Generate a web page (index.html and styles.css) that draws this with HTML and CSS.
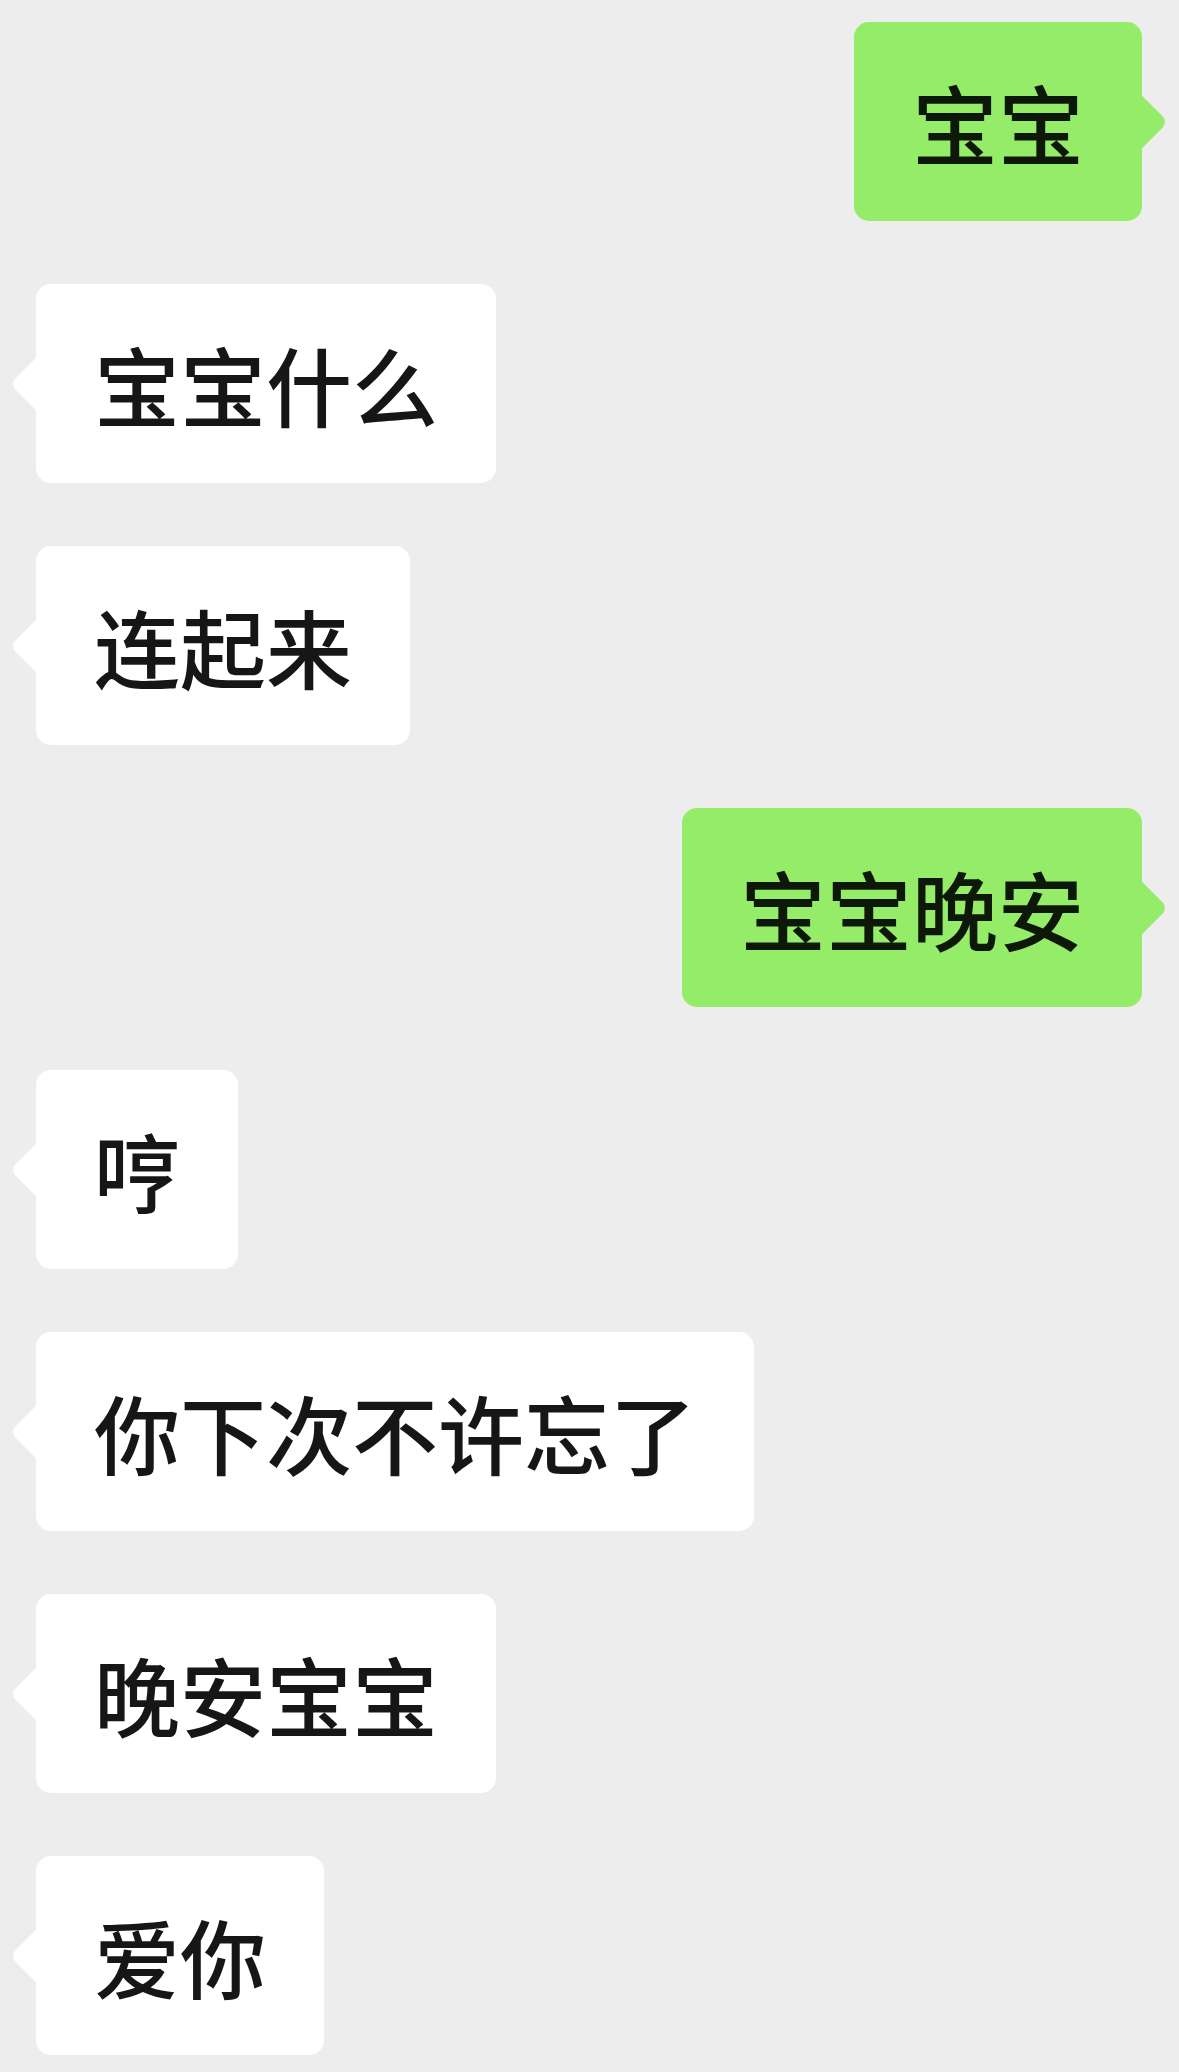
FILE: index.html
```html
<!DOCTYPE html>
<html lang="zh-CN">
<head>
  <meta charset="UTF-8" />
  <title>聊天</title>
  <meta name="viewport" content="width=device-width, initial-scale=1" />
  <link rel="stylesheet" href="styles.css">
</head>
<body>
  <div class="chat">
    <div class="row me"><div class="bubble">宝宝</div></div>
    <div class="row"><div class="bubble">宝宝什么</div></div>
    <div class="row"><div class="bubble">连起来</div></div>
    <div class="row me"><div class="bubble">宝宝晚安</div></div>
    <div class="row"><div class="bubble">哼</div></div>
    <div class="row"><div class="bubble">你下次不许忘了</div></div>
    <div class="row"><div class="bubble">晚安宝宝</div></div>
    <div class="row"><div class="bubble">爱你</div></div>
  </div>
</body>
</html>
```

FILE: styles.css
```css
html, body {
  margin: 0; padding: 0;
  background: #ededed;
  font-family: "Noto Sans CJK SC", "Noto Sans", sans-serif;
}
.chat {
  display: flex;
  flex-direction: column;
  gap: 63px;
  padding: 22px 37px 20px 36px;
}
.row {
  display: flex;
  justify-content: flex-start;
}
.row.me {
  justify-content: flex-end;
}
/* message bubble, tail drawn with a rotated square */
.bubble {
  position: relative;
  background: #fff;
  color: #161616;
  font-size: 86px;
  font-weight: 500;
  line-height: 87px;
  padding: 56px 58px;
  border-radius: 15px;
  white-space: nowrap;
}
.bubble::before {
  content: "";
  position: absolute;
  top: 50%;
  left: 0;
  width: 37px;
  height: 37px;
  background: inherit;
  border-radius: 0 0 0 8px;
  transform: translate(-50%, -50%) rotate(45deg);
}
.me .bubble {
  background: #95ec69;
  color: #0d1809;
}
.me .bubble::before {
  left: auto;
  right: 0;
  border-radius: 0 8px 0 0;
  transform: translate(50%, -50%) rotate(45deg);
}
```
